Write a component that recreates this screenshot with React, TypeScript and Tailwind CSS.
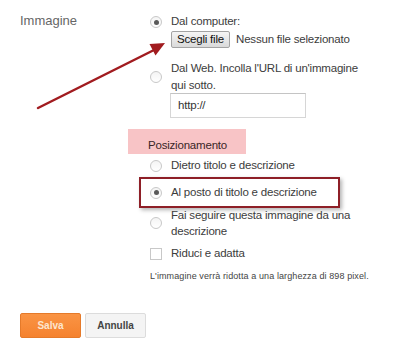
import React from "react";

function Radio({ checked = false }: { checked?: boolean }) {
  return (
    <span className="flex h-[12px] w-[12px] shrink-0 items-center justify-center rounded-full border border-[#c8c8c8] bg-gradient-to-b from-[#f4f4f4] to-white">
      {checked && <span className="h-[5px] w-[5px] rounded-full bg-[#5a5a5a]" />}
    </span>
  );
}

export default function App() {
  return (
    <div className="relative h-[346px] w-[395px] overflow-hidden bg-white font-['Liberation_Sans',Arial,sans-serif] text-[11.5px] tracking-[-0.2px] text-[#3c3c3c]">
      <div className="flex pt-[13px]">
        <div className="w-[150px] shrink-0 pl-[20px] text-[13px] leading-[16px] tracking-normal text-[#666]">
          Immagine
        </div>

        <div className="flex flex-col">
          {/* Dal computer */}
          <div className="flex h-[18px] items-center gap-[9px]">
            <Radio checked />
            <span>Dal computer:</span>
          </div>
          <div className="ml-[21px] flex h-[17px] items-center gap-[6px]">
            <span className="flex h-[17px] items-center rounded-[2px] border border-[#a3a3a3] bg-gradient-to-b from-[#f5f5f5] to-[#dadada] px-[5px] text-[#111]">
              Scegli file
            </span>
            <span>Nessun file selezionato</span>
          </div>

          {/* Dal Web */}
          <div className="mt-[12px] flex items-center gap-[9px]">
            <Radio />
            <span className="leading-[17px]">
              Dal Web. Incolla l'URL di un'immagine
              <br />
              qui sotto.
            </span>
          </div>
          <div className="ml-[20px] mt-[-1px] flex h-[25px] w-[136px] items-center border border-[#d6d6d6] border-t-[#c4c4c4] px-[7px] text-[#333]">
            http://
          </div>

          {/* Posizionamento */}
          <div className="ml-[-22px] mt-[11px] h-[25px] w-[118px] bg-[#f8c4c6] pl-[20px] pt-[8px] leading-[16px] text-[#3a2626]">
            Posizionamento
          </div>
          <div className="mt-[3px] flex h-[18px] items-center gap-[9px]">
            <Radio />
            <span>Dietro titolo e descrizione</span>
          </div>
          <div className="ml-[-11px] mt-[2px] flex h-[31px] w-[201px] items-center gap-[9px] border-2 border-[#8e1f27] pl-[9px] shadow-[2px_2px_4px_rgba(0,0,0,0.3)]">
            <Radio checked />
            <span>Al posto di titolo e descrizione</span>
          </div>
          <div className="mt-[-1px] flex items-center gap-[9px]">
            <Radio />
            <span className="leading-[16px]">
              Fai seguire questa immagine da una
              <br />
              descrizione
            </span>
          </div>
          <div className="mt-[6px] flex h-[18px] items-center gap-[9px]">
            <span className="h-[12px] w-[12px] shrink-0 border border-[#c8c8c8] bg-white" />
            <span>Riduci e adatta</span>
          </div>
          <div className="mt-[7px] text-[9px] leading-[12px] tracking-[0.1px] text-[#444]">
            L'immagine verrà ridotta a una larghezza di 898 pixel.
          </div>
        </div>
      </div>

      {/* Buttons */}
      <div className="mt-[31px] flex gap-[4px] pl-[20px]">
        <button className="flex h-[25px] w-[61px] items-center justify-center rounded-[2px] border border-[#e57a2a] bg-gradient-to-b from-[#fa9444] to-[#f5822e] text-[10px] font-bold tracking-normal text-[#fde6cf]">
          Salva
        </button>
        <button className="flex h-[25px] w-[61px] items-center justify-center rounded-[2px] border border-[#dcdcdc] bg-[#f4f4f4] text-[10px] font-bold tracking-normal text-[#444]">
          Annulla
        </button>
      </div>

      {/* red arrow */}
      <svg className="pointer-events-none absolute left-0 top-0" width="395" height="346">
        <line x1="38" y1="108" x2="154" y2="50" stroke="#a11b1f" strokeWidth="2.5" strokeLinecap="round" />
        <polygon points="165,43 149.5,44 155.5,55.5" fill="#a11b1f" />
      </svg>
    </div>
  );
}
